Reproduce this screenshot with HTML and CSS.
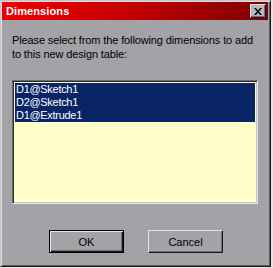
FILE: index.html
```html
<!DOCTYPE html>
<html>
<head>
<meta charset="utf-8">
<link rel="stylesheet" href="styles.css">
</head>
<body>
<div class="window">
  <div class="titlebar">
    <span class="title">Dimensions</span>
    <span class="close">
      <svg width="8" height="7" viewBox="0 0 8 7"><path d="M0 0h2l2 2.5L6 0h2L5 3.5 8 7H6L4 4.5 2 7H0l3-3.5z" fill="#000"/></svg>
    </span>
  </div>
  <div class="content">
    <p class="prompt">Please select from the following dimensions to add to this new design table:</p>
    <ul class="list">
      <li class="item selected">D1@Sketch1</li>
      <li class="item selected">D2@Sketch1</li>
      <li class="item selected">D1@Extrude1</li>
    </ul>
    <div class="buttons">
      <button class="btn default">OK</button>
      <button class="btn">Cancel</button>
    </div>
  </div>
</div>
</body>
</html>
```

FILE: styles.css
```css
html, body {
  margin: 0;
  padding: 0;
}
body {
  background: #e4e4e4;
  width: 273px;
  height: 268px;
  overflow: hidden;
}
.window {
  box-sizing: border-box;
  width: 271px;
  height: 267px;
  background: #a3a2a7;
  border-top: 1px solid #c8c6cc;
  border-left: 1px solid #c8c6cc;
  border-right: 1px solid #1a1a1a;
  border-bottom: 1px solid #1a1a1a;
  box-shadow: inset 1px 1px 0 #dcdce0, inset -1px -1px 0 #5a595e;
  padding: 1px 2px 2px 1px;
  display: flex;
  flex-direction: column;
  font-family: "Liberation Sans", Arial, sans-serif;
}
.titlebar {
  height: 18px;
  background: linear-gradient(to right, #ee0000 0%, #c80000 45%, #7e0000 100%);
  display: flex;
  align-items: center;
  justify-content: space-between;
  padding: 0 2px 0 4px;
}
.title {
  color: #fff;
  font-weight: bold;
  font-size: 11px;
  letter-spacing: 0.1px;
}
.close {
  box-sizing: border-box;
  width: 16px;
  height: 14px;
  background: #b8b6bc;
  border-top: 1px solid #e6e6ea;
  border-left: 1px solid #e6e6ea;
  border-right: 1px solid #202020;
  border-bottom: 1px solid #202020;
  box-shadow: inset -1px -1px 0 #6e6d72;
  display: flex;
  align-items: center;
  justify-content: center;
}
.content {
  flex: 1;
  padding: 13px 9px 0 10px;
  display: flex;
  flex-direction: column;
}
.prompt {
  margin: 0;
  font-size: 11px;
  line-height: 14px;
  color: #000;
  letter-spacing: -0.12px;
}
.list {
  list-style: none;
  margin: 19px 0 0 0;
  padding: 0;
  box-sizing: border-box;
  width: 246px;
  height: 124px;
  background: #ffffcc;
  border-top: 1px solid #6c6b70;
  border-left: 1px solid #6c6b70;
  border-right: 1px solid #e8e8ec;
  border-bottom: 1px solid #e8e8ec;
  box-shadow: inset 1px 1px 0 #2a2a2e, inset -1px -1px 0 #c4c3c8;
  padding: 2px 2px 2px 2px;
}
.item {
  height: 13px;
  line-height: 13px;
  font-size: 11px;
  padding-left: 1px;
  color: #000;
  letter-spacing: -0.3px;
}
.item.selected {
  background: #0a2468;
  color: #fff;
}
.buttons {
  margin-top: 26px;
  display: flex;
  justify-content: center;
  gap: 24px;
  padding-left: 1px;
}
.btn {
  box-sizing: border-box;
  width: 75px;
  height: 23px;
  margin: 0;
  padding: 0;
  background: #a3a2a7;
  font-family: "Liberation Sans", Arial, sans-serif;
  font-size: 11px;
  color: #000;
  border-top: 1px solid #e6e6ea;
  border-left: 1px solid #e6e6ea;
  border-right: 1px solid #1a1a1a;
  border-bottom: 1px solid #1a1a1a;
  box-shadow: inset -1px -1px 0 #6e6d72;
}
.btn.default {
  border: 1px solid #000;
  box-shadow: inset 1px 1px 0 #e6e6ea, inset -1px -1px 0 #1a1a1a, inset -2px -2px 0 #6e6d72;
}
```
